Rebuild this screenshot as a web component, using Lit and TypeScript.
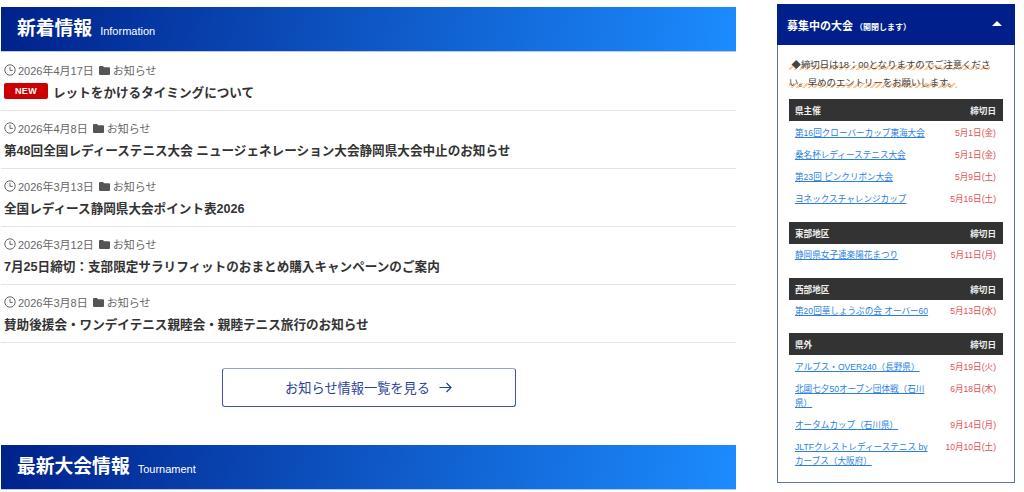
// app.ts - news list and open tournament sidebar
import { LitElement, html, css } from 'lit';
import { customElement } from 'lit/decorators.js';

interface NewsItem {
  date: string;
  title: string;
  isNew?: boolean;
}

interface Entry {
  name: string;
  deadline: string;
}

interface EntryGroup {
  label: string;
  entries: Entry[];
}

const NEWS: NewsItem[] = [
  { date: '2026年4月17日', title: 'レットをかけるタイミングについて', isNew: true },
  { date: '2026年4月8日', title: '第48回全国レディーステニス大会 ニュージェネレーション大会静岡県大会中止のお知らせ' },
  { date: '2026年3月13日', title: '全国レディース静岡県大会ポイント表2026' },
  { date: '2026年3月12日', title: '7月25日締切：支部限定サラリフィットのおまとめ購入キャンペーンのご案内' },
  { date: '2026年3月8日', title: '賛助後援会・ワンデイテニス親睦会・親睦テニス旅行のお知らせ' }
];

const GROUPS: EntryGroup[] = [
  {
    label: '県主催',
    entries: [
      { name: '第16回クローバーカップ東海大会', deadline: '5月1日(金)' },
      { name: '桑名杯レディーステニス大会', deadline: '5月1日(金)' },
      { name: '第23回 ピンクリボン大会', deadline: '5月9日(土)' },
      { name: 'ヨネックスチャレンジカップ', deadline: '5月16日(土)' }
    ]
  },
  { label: '東部地区', entries: [{ name: '静岡県女子連楽陽花まつり', deadline: '5月11日(月)' }] },
  { label: '西部地区', entries: [{ name: '第20回華しょうぶの会 オーバー60', deadline: '5月13日(水)' }] },
  {
    label: '県外',
    entries: [
      { name: 'アルプス・OVER240（長野県）', deadline: '5月19日(火)' },
      { name: '北國七夕50オープン団体戦（石川県）', deadline: '6月18日(木)' },
      { name: 'オータムカップ（石川県）', deadline: '9月14日(月)' },
      { name: 'JLTFクレストレディーステニス by カーブス（大阪府）', deadline: '10月10日(土)' }
    ]
  }
];

@customElement('app-root')
export class AppRoot extends LitElement {
  static override styles = css`
    :host {
      display: block;
      width: 1024px;
      height: 492px;
      overflow: hidden;
      background: #fff;
      font-family: 'Liberation Sans', 'Noto Sans CJK JP', sans-serif;
      color: #333;
    }

    .page {
      display: flex;
      align-items: flex-start;
      padding-left: 1px;
    }

    .main {
      width: 735px;
      padding-top: 7px;
    }

    .heading {
      height: 45px;
      display: flex;
      align-items: center;
      padding-left: 16px;
      box-sizing: border-box;
      color: #fff;
      background: linear-gradient(100deg, #00218a 0%, #1c8cff 100%);
      border-bottom: 1px solid #b9c9e6;
    }

    .heading h2 {
      margin: 0;
      font-size: 18.8px;
      font-weight: 700;
      line-height: 1;
    }

    .heading span {
      font-size: 11px;
      margin-left: 8px;
      padding-top: 3px;
    }

    .news-item {
      height: 58px;
      box-sizing: border-box;
      border-bottom: 1px solid #e4e4e4;
      padding: 9px 3px 0;
    }

    .news-item:first-child {
      height: 59px;
      padding-top: 10px;
    }

    .meta {
      display: flex;
      align-items: center;
      height: 16px;
      font-size: 11px;
      color: #666;
    }

    .meta svg {
      display: block;
      flex: none;
    }

    .clock {
      margin-right: 2px;
    }

    .folder {
      margin: 0 3px 0 5px;
    }

    .title {
      display: flex;
      align-items: center;
      margin-top: 3px;
      height: 20px;
      font-size: 12.6px;
      font-weight: 700;
      color: #333;
    }

    .new {
      width: 44px;
      height: 16px;
      margin-right: 5px;
      border-radius: 2px;
      background: #cc0000;
      color: #fff;
      font-size: 9px;
      font-weight: 700;
      letter-spacing: 0.3px;
      display: flex;
      align-items: center;
      justify-content: center;
    }

    .more {
      display: flex;
      justify-content: center;
      padding: 25px 0 38px;
    }

    .more a {
      width: 294px;
      height: 39px;
      box-sizing: border-box;
      display: flex;
      align-items: center;
      justify-content: center;
      border: 1px solid #3f55a8;
      border-top-color: #98a4cf;
      border-radius: 3px;
      color: #2a3f98;
      font-size: 13.2px;
    }

    .more svg {
      margin-left: 9px;
    }

    .side {
      width: 238px;
      margin: 4px 0 0 41px;
    }

    .side-head {
      height: 41px;
      box-sizing: border-box;
      display: flex;
      align-items: center;
      justify-content: space-between;
      padding: 0 13px 0 10px;
      background: #001f8a;
      color: #fff;
      font-size: 11px;
      font-weight: 700;
    }

    .side-head small {
      font-size: 8px;
      font-weight: 700;
      margin-left: 2px;
    }

    .caret {
      width: 0;
      height: 0;
      border-left: 5.5px solid transparent;
      border-right: 5.5px solid transparent;
      border-bottom: 5px solid #fff;
      margin-bottom: 3px;
    }

    .side-body {
      height: 438px;
      box-sizing: border-box;
      border: 1px solid #5a72bd;
      border-top: 0;
      padding: 11px 11px 0;
    }

    .notice {
      margin: 0 0 7px;
      font-size: 9.4px;
      line-height: 18px;
      color: #444;
    }

    .notice span {
      background: repeating-linear-gradient(-45deg, #ffc999 0 2px, #fff 2px 4px);
      background-position: left bottom;
      background-size: 100% 5px;
      background-repeat: no-repeat;
    }

    .group {
      margin-bottom: 11.6px;
    }

    .group-head {
      height: 22px;
      box-sizing: border-box;
      display: flex;
      align-items: center;
      justify-content: space-between;
      padding: 0 7px 0 6px;
      background: #333;
      color: #eee;
      font-size: 8.6px;
      font-weight: 700;
    }

    .row {
      display: flex;
      justify-content: space-between;
      padding: 5.6px 7px 3.2px 6px;
      font-size: 8.6px;
      line-height: 13.5px;
    }

    .row a {
      width: 134px;
      color: #2a7fe0;
      text-decoration: underline;
    }

    .row b {
      flex: none;
      font-weight: 400;
      color: #e04f4f;
    }
  `;

  private renderNews(item: NewsItem) {
    return html`
      <div class="news-item">
        <div class="meta">
          <svg class="clock" width="12" height="12" viewBox="0 0 12 12" fill="none" stroke="#666" stroke-width="1">
            <circle cx="6" cy="6" r="5.2"></circle>
            <path d="M6 2.8V6.4H8.8"></path>
          </svg>
          ${item.date}
          <svg class="folder" width="11" height="9" viewBox="0 0 11 9" fill="#555">
            <path d="M0 1a1 1 0 0 1 1-1h3l1 1.3h5a1 1 0 0 1 1 1V8a1 1 0 0 1-1 1H1a1 1 0 0 1-1-1z"></path>
          </svg>
          お知らせ
        </div>
        <div class="title">
          ${item.isNew ? html`<span class="new">NEW</span>` : null}${item.title}
        </div>
      </div>
    `;
  }

  private renderGroup(group: EntryGroup) {
    return html`
      <div class="group">
        <div class="group-head"><span>${group.label}</span><span>締切日</span></div>
        ${group.entries.map(
          (e) => html`<div class="row"><a>${e.name}</a><b>${e.deadline}</b></div>`
        )}
      </div>
    `;
  }

  override render() {
    return html`
      <div class="page">
        <div class="main">
          <div class="heading"><h2>新着情報</h2><span>Information</span></div>
          <div>${NEWS.map((n) => this.renderNews(n))}</div>
          <div class="more">
            <a>
              お知らせ情報一覧を見る
              <svg width="13" height="11" viewBox="0 0 13 11" fill="none" stroke="#2a3f98" stroke-width="1.2">
                <path d="M0.5 5.5H12M7.5 1L12 5.5L7.5 10"></path>
              </svg>
            </a>
          </div>
          <div class="heading"><h2>最新大会情報</h2><span>Tournament</span></div>
        </div>
        <aside class="side">
          <div class="side-head">
            <span>募集中の大会<small>（開閉します）</small></span>
            <i class="caret"></i>
          </div>
          <div class="side-body">
            <p class="notice">
              <span>&nbsp;◆締切日は18：00となりますのでご注意ください。早めのエントリーをお願いします。</span>
            </p>
            ${GROUPS.map((g) => this.renderGroup(g))}
          </div>
        </aside>
      </div>
    `;
  }
}
